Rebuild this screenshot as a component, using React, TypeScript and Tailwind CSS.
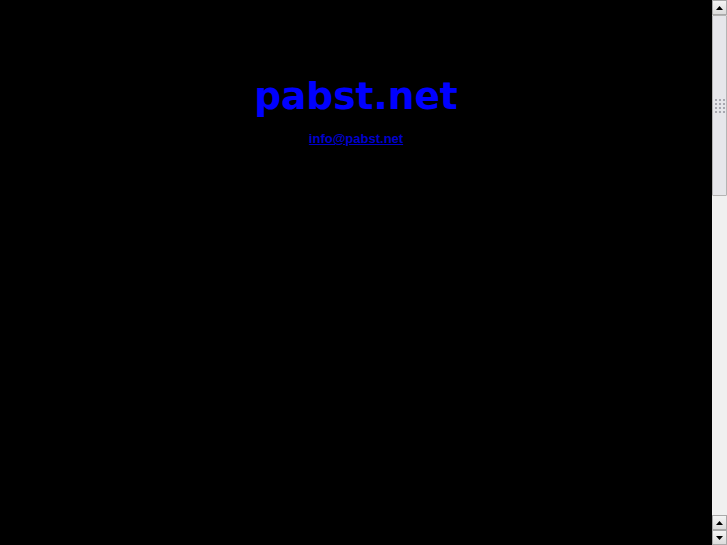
import { useMemo } from 'react';

function ArrowButton({ dir }: { dir: 'up' | 'down' }) {
  return (
    <div className="flex h-[15px] w-[15px] items-center justify-center border border-[#a9a9a9] bg-gradient-to-b from-[#f4f4f4] to-[#dcdcdc]">
      <svg width="7" height="4" viewBox="0 0 7 4">
        {dir === 'up' ? <path d="M0 4 L3.5 0 L7 4 Z" fill="#000" /> : <path d="M0 0 L3.5 4 L7 0 Z" fill="#000" />}
      </svg>
    </div>
  );
}

function Scrollbar() {
  const dots = useMemo(() => Array.from({ length: 12 }), []);
  return (
    <div className="flex h-full w-[15px] shrink-0 flex-col bg-[#ececec]">
      <ArrowButton dir="up" />
      <div className="flex flex-1 flex-col bg-[#f0f0f0]">
        {/* thumb */}
        <div className="flex h-[181px] items-center justify-center rounded-[1px] border border-[#b4b4b4] bg-[#e6e6ea]">
          <div className="grid grid-cols-3 gap-[2px]">
            {dots.map((_, i) => (
              <div key={i} className="h-[2px] w-[2px] bg-[#a8a8b0]" />
            ))}
          </div>
        </div>
      </div>
      <ArrowButton dir="up" />
      <ArrowButton dir="down" />
    </div>
  );
}

export default function App() {
  return (
    <div className="flex h-[545px] w-[727px] overflow-hidden bg-black">
      <div className="flex flex-1 flex-col items-center pt-[74px]">
        <h1 className="font-['DejaVu_Sans',sans-serif] text-[37.5px] font-bold leading-[44px] text-[#0000ff]">
          pabst.net
        </h1>
        <a
          href="mailto:info@pabst.net"
          className="mt-[13px] font-['Liberation_Sans',Arial,sans-serif] text-[13px] font-bold leading-[16px] text-[#0000cc] underline"
        >
          info@pabst.net
        </a>
      </div>
      <Scrollbar />
    </div>
  );
}
